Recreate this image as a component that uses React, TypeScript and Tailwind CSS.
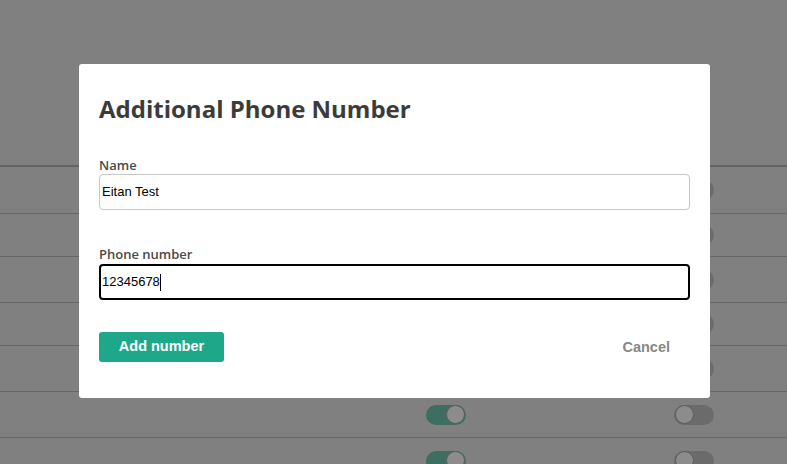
import React from "react";

function Toggle({ on, hidden }: { on: boolean; hidden?: boolean }) {
  if (hidden) return <div className="w-[40px] h-[20px]" />;
  return (
    <div
      className={`w-[40px] h-[20px] rounded-full flex items-center px-[1px] ${
        on ? "bg-[#3d6e62] justify-end" : "bg-[#6b6b6b] justify-start"
      }`}
    >
      <div className="w-[19px] h-[19px] rounded-full bg-[#8c8c8c] border border-[#5e5e5e]" />
    </div>
  );
}

const rows = [
  { h: 47, left: false },
  { h: 43, left: false },
  { h: 46, left: false },
  { h: 43, left: false },
  { h: 46, left: false },
  { h: 46, left: true },
  { h: 46, left: true },
];

export default function App() {
  return (
    <div
      className="relative w-[787px] h-[464px] overflow-hidden bg-[#808080]"
      style={{ fontFamily: "'Open Sans', sans-serif" }}
    >
      {/* background page */}
      <div className="flex flex-col">
        <div className="h-[165px]" />
        <div className="h-[2px] bg-[#636363]" />
        {rows.map((r, i) => (
          <div
            key={i}
            className="flex items-center border-b border-[#666666] pl-[426px]"
            style={{ height: r.h }}
          >
            <Toggle on={true} hidden={!r.left} />
            <div className="w-[208px]" />
            <Toggle on={false} />
          </div>
        ))}
      </div>

      {/* modal */}
      <div className="absolute left-[79px] top-[64px] w-[631px] h-[334px] bg-white rounded-[3px] px-[20px] pt-[29px]">
        <h2 className="text-[24px] leading-[32px] font-bold text-[#3b3b3b]">
          Additional Phone Number
        </h2>
        <div className="mt-[31px]">
          <div className="text-[13px] leading-[18px] font-semibold text-[#4a4a4a]">Name</div>
          <div className="h-[36px] border border-[#c6c6c6] rounded-[4px] flex items-center pl-[2px]">
            <span
              className="text-[13px] text-black"
              style={{ fontFamily: "'Liberation Sans', Arial, sans-serif" }}
            >
              Eitan Test
            </span>
          </div>
        </div>
        <div className="mt-[35px]">
          <div className="text-[13px] leading-[18px] font-semibold text-[#4a4a4a]">Phone number</div>
          <div className="mt-px h-[36px] border-2 border-black rounded-[4px] flex items-center pl-[1px]">
            <span
              className="text-[13px] text-black"
              style={{ fontFamily: "'Liberation Sans', Arial, sans-serif" }}
            >
              12345678
            </span>
            <span className="w-px h-[17px] bg-black" />
          </div>
        </div>
        <div
          className="mt-[32px] flex items-center justify-between"
          style={{ fontFamily: "'Liberation Sans', Arial, sans-serif" }}
        >
          <button className="h-[30px] w-[125px] rounded-[3px] bg-[#1ea88a] text-white text-[14.5px] font-bold">
            Add number
          </button>
          <button className="h-[30px] pt-[2px] pr-[20px] text-[#888888] text-[14.5px] font-bold">
            Cancel
          </button>
        </div>
      </div>
    </div>
  );
}
